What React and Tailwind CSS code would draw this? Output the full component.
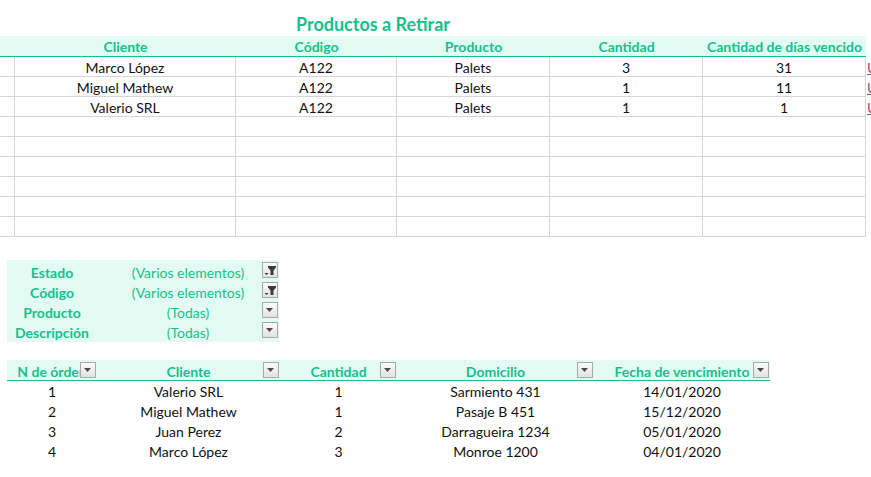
const topCols = ["w-[15px]", "w-[221px]", "w-[161px]", "w-[153px]", "w-[153px]", "w-[163px]"];
const topHead = ["", "Cliente", "Código", "Producto", "Cantidad", "Cantidad de días vencido"];
const topRows = [
  ["", "Marco López", "A122", "Palets", "3", "31"],
  ["", "Miguel Mathew", "A122", "Palets", "1", "11"],
  ["", "Valerio SRL", "A122", "Palets", "1", "1"],
  ["", "", "", "", "", ""],
  ["", "", "", "", "", ""],
  ["", "", "", "", "", ""],
  ["", "", "", "", "", ""],
  ["", "", "", "", "", ""],
  ["", "", "", "", "", ""],
];

const filters = [
  { label: "Estado", value: "(Varios elementos)", filtered: true },
  { label: "Código", value: "(Varios elementos)", filtered: true },
  { label: "Producto", value: "(Todas)", filtered: false },
  { label: "Descripción", value: "(Todas)", filtered: false },
];

const orderCols = [
  { label: "N de órden", w: "w-[90px]" },
  { label: "Cliente", w: "w-[183px]" },
  { label: "Cantidad", w: "w-[117px]" },
  { label: "Domicilio", w: "w-[197px]" },
  { label: "Fecha de vencimiento", w: "w-[176px]" },
];
const orders = [
  ["1", "Valerio SRL", "1", "Sarmiento 431", "14/01/2020"],
  ["2", "Miguel Mathew", "1", "Pasaje B 451", "15/12/2020"],
  ["3", "Juan Perez", "2", "Darragueira 1234", "05/01/2020"],
  ["4", "Marco López", "3", "Monroe 1200", "04/01/2020"],
];

function DropButton({ filtered, top = "top-[2px]" }) {
  return (
    <span
      className={`absolute right-[1px] ${top} flex h-[16px] w-[16px] items-center justify-center border border-[#a9a9a9] bg-linear-to-b from-[#fbfbfb] to-[#e2e2e2]`}
    >
      {filtered ? (
        <svg width="14" height="14" viewBox="0 0 14 14" aria-hidden="true">
          <path d="M5 3h8v1.5L10.5 7.5V12h-3V7.5L5 4.5z" fill="#3a3a3a" />
          <path d="M1.5 10h4l-2 2z" fill="#3a3a3a" />
        </svg>
      ) : (
        <svg width="8" height="5" viewBox="0 0 8 5" className="mt-[1px]" aria-hidden="true">
          <path d="M0 0h7L3.5 4z" fill="#4a4a4a" />
        </svg>
      )}
    </span>
  );
}

export default function App() {
  return (
    <div className="h-[477px] w-[871px] overflow-hidden bg-white font-['Lato',sans-serif] text-[14px] text-[#111]">
      <div className="h-[36px] w-[746px] pt-[12px] text-center text-[18px] font-bold leading-[24px] text-[#17bf8d]">
        Productos a Retirar
      </div>

      <div className="flex h-[21px] w-[866px] border-b border-[#19be8b] bg-[#e3fcf3] font-bold text-[#17bf8d]">
        {topHead.map((h, i) => (
          <div key={i} className={`${topCols[i]} whitespace-nowrap text-center leading-[22px]`}>
            {h}
          </div>
        ))}
      </div>
      {topRows.map((row, r) => (
        <div key={r} className="flex h-[20px]">
          {row.map((cell, i) => (
            <div
              key={i}
              className={`${topCols[i]} h-[20px] border-b border-r border-[#d6d6d6] text-center leading-[21px]`}
            >
              {cell}
            </div>
          ))}
          <div className="w-[5px] overflow-hidden whitespace-nowrap pl-[1px] leading-[21px] text-[#954f72] underline">
            {r < 3 ? "Ubicación" : ""}
          </div>
        </div>
      ))}

      <div className="ml-[7px] mt-[23px] w-[272px] bg-[#e3fcf3] pb-[1px] pt-[1px] text-[#17bf8d]">
        {filters.map((f) => (
          <div key={f.label} className="relative flex h-[20px] items-center pt-[2px]">
            <div className="w-[90px] text-center font-bold">{f.label}</div>
            <div className="flex-1 text-center">{f.value}</div>
            <DropButton filtered={f.filtered} top="top-[1px]" />
          </div>
        ))}
      </div>

      <div className="ml-[7px] mt-[18px] flex h-[21px] w-[763px] border-b border-[#19be8b] bg-[#e3fcf3] font-bold text-[#17bf8d]">
        {orderCols.map((c) => (
          <div key={c.label} className={`${c.w} relative overflow-hidden whitespace-nowrap text-center leading-[23px]`}>
            {c.label}
            <DropButton filtered={false} />
          </div>
        ))}
      </div>
      {orders.map((row, r) => (
        <div key={r} className="ml-[7px] flex h-[20px]">
          {row.map((cell, i) => (
            <div key={i} className={`${orderCols[i].w} text-center leading-[22px]`}>
              {cell}
            </div>
          ))}
        </div>
      ))}
    </div>
  );
}
